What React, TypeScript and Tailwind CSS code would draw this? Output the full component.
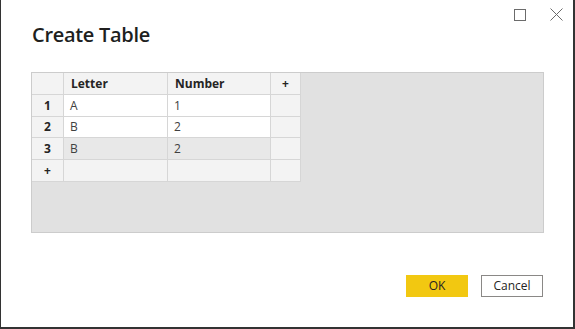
const rows = [
  { n: '1', letter: 'A', number: '1', selected: false },
  { n: '2', letter: 'B', number: '2', selected: false },
  { n: '3', letter: 'B', number: '2', selected: true },
];

const cell = 'flex items-center border-r border-b border-[#d6d6d6] text-[12px]';

export default function App() {
  return (
    <div className="flex h-[329px] w-[575px] flex-col border-r-2 border-b-2 border-l border-[#333333] bg-white font-['Open_Sans',sans-serif] text-[#252423]">
      <div className="flex h-[28px] items-end justify-end gap-[24px] pr-[10px]">
        <svg width="12" height="12" viewBox="0 0 12 12" className="mb-[7px]">
          <rect x="0.5" y="0.5" width="11" height="11" fill="none" stroke="#6b6b6b" strokeWidth="1" />
        </svg>
        <svg width="13" height="13" viewBox="0 0 13 13" className="mb-[7px]">
          <path d="M0.5 0.5 L12.5 12.5 M12.5 0.5 L0.5 12.5" stroke="#6b6b6b" strokeWidth="1" />
        </svg>
      </div>

      <h1 className="ml-[31px] mt-[-7px] text-[20px] leading-[28px] font-semibold tracking-[-0.3px] text-[#201f1e]">
        Create Table
      </h1>

      <div className="mt-[23px] ml-[30px] mr-[29px] h-[161px] border border-[#cccccc] bg-[#e1e1e1]">
        <div className="grid w-fit grid-cols-[32px_104px_103px_30px]">
          <div className={`${cell} h-[22px] bg-[#f3f3f3]`} />
          <div className={`${cell} h-[22px] bg-[#f3f3f3] pl-[7px] font-bold`}>Letter</div>
          <div className={`${cell} h-[22px] bg-[#f3f3f3] pl-[7px] font-bold`}>Number</div>
          <div className={`${cell} h-[22px] justify-center bg-[#f3f3f3] font-bold`}>+</div>

          {rows.map((r, i) => {
            const h = i === 1 ? 'h-[21px]' : 'h-[22px]';
            const bg = r.selected ? 'bg-[#e8e8e8]' : 'bg-white';
            return [
              <div key={`n${i}`} className={`${cell} ${h} justify-center bg-[#f3f3f3] font-bold`}>{r.n}</div>,
              <div key={`l${i}`} className={`${cell} ${h} ${bg} pl-[6px] text-[#404040]`}>{r.letter}</div>,
              <div key={`v${i}`} className={`${cell} ${h} ${bg} pl-[6px] text-[#404040]`}>{r.number}</div>,
              <div key={`p${i}`} className={`${cell} ${h} bg-[#f3f3f3]`} />,
            ];
          })}

          <div className={`${cell} h-[22px] justify-center bg-[#f3f3f3] font-bold`}>+</div>
          <div className={`${cell} h-[22px] bg-[#f3f3f3]`} />
          <div className={`${cell} h-[22px] bg-[#f3f3f3]`} />
          <div className={`${cell} h-[22px] bg-[#f3f3f3]`} />
        </div>
      </div>

      <div className="mt-auto mb-[30px] mr-[30px] flex justify-end gap-[13px]">
        <button className="flex h-[22px] w-[62px] items-center justify-center bg-[#f2c811] text-[12px] text-[#252423]">
          OK
        </button>
        <button className="flex h-[22px] w-[62px] items-center justify-center border border-[#8a8886] bg-white text-[12px] text-[#252423]">
          Cancel
        </button>
      </div>
    </div>
  );
}
